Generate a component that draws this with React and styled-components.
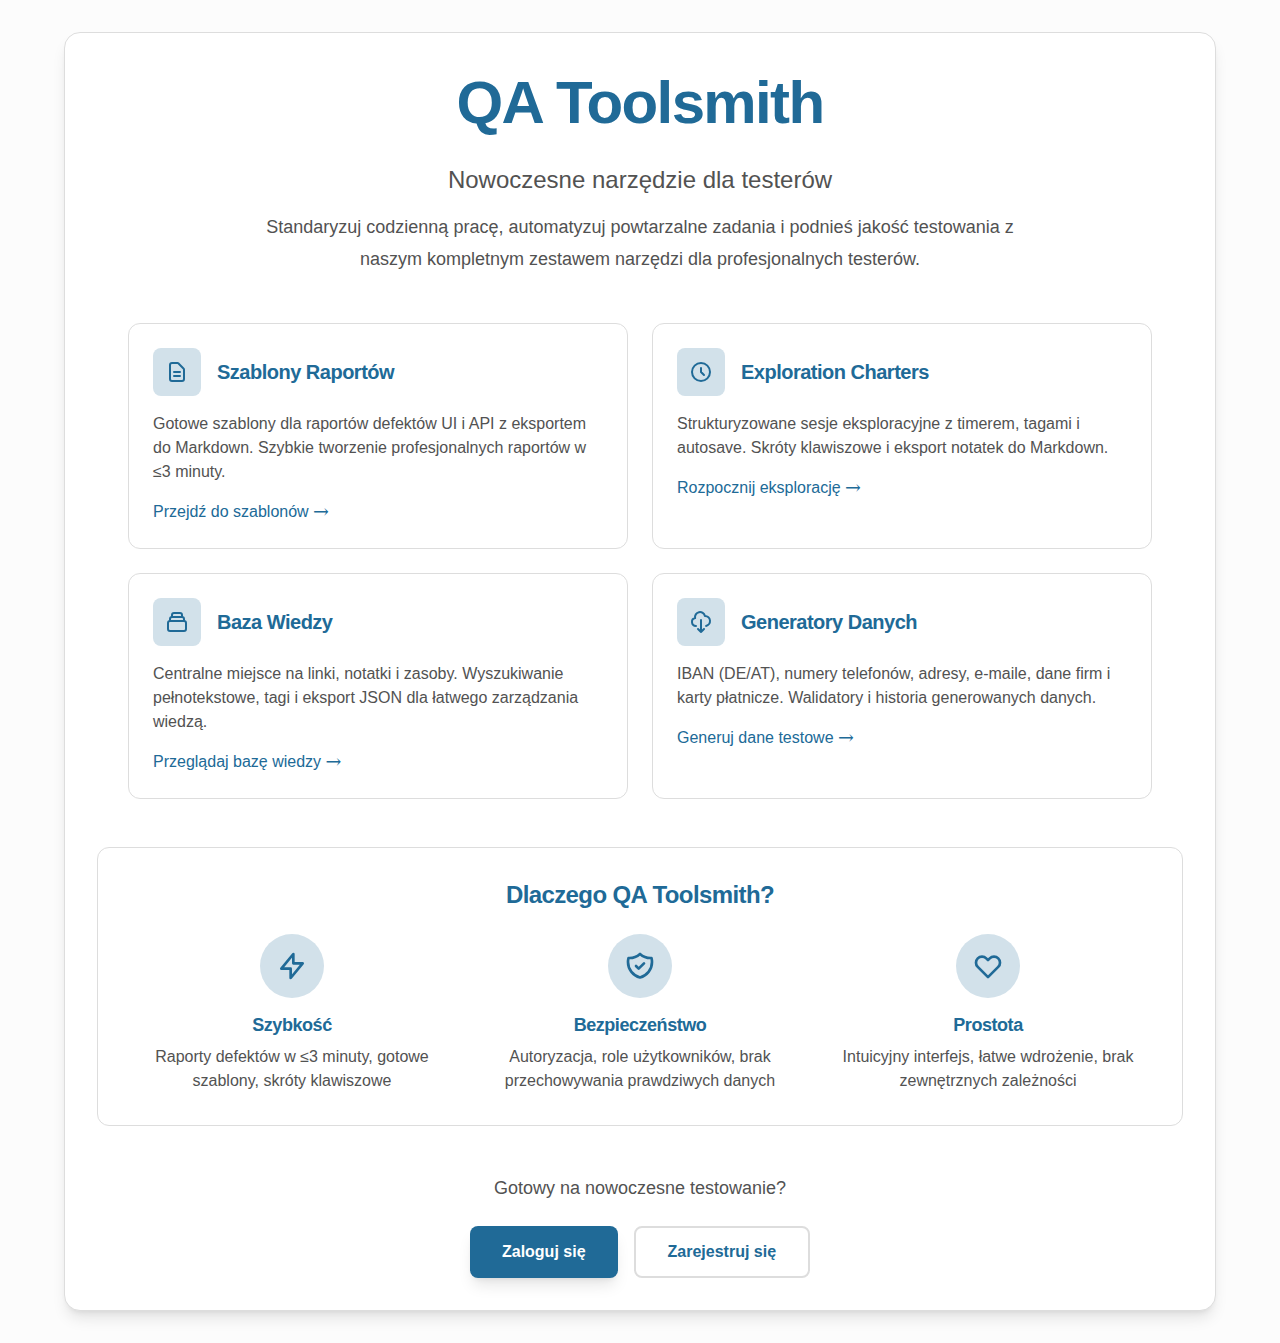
import React from "react";
import styled, { createGlobalStyle } from "styled-components";

const color = {
  primary: "#206a97",
  tint: "#d2e1ea",
  text: "#525252",
  border: "#dddddd",
  page: "#fcfcfc",
};

const GlobalStyle = createGlobalStyle`
  *, *::before, *::after { box-sizing: border-box; }
  body {
    margin: 0;
    background: ${color.page};
    color: ${color.text};
    font-family: Arial, "Liberation Sans", sans-serif;
    font-size: 16px;
    line-height: 24px;
  }
  h1, h2, h3, p { margin: 0; }
`;

const Page = styled.main`
  padding: 32px 64px;
`;

const Panel = styled.div`
  display: flex;
  flex-direction: column;
  gap: 48px;
  padding: 32px;
  background: #fff;
  border: 1px solid ${color.border};
  border-radius: 16px;
  box-shadow: 0 10px 15px -3px rgba(0, 0, 0, 0.1), 0 4px 6px -4px rgba(0, 0, 0, 0.1);
`;

const Heading = styled.h2`
  color: ${color.primary};
  font-size: ${(p) => p.$size}px;
  font-weight: 700;
  line-height: 1.25;
  letter-spacing: ${(p) => p.$tracking || "-0.025em"};
`;

const Hero = styled.header`
  text-align: center;
`;

const Subtitle = styled.p`
  margin-top: 24px;
  font-size: 24px;
  line-height: 32px;
`;

const Lead = styled.p`
  max-width: 768px;
  margin: 16px auto 0;
  font-size: 18px;
  line-height: 1.75;
`;

const CardGrid = styled.section`
  display: grid;
  grid-template-columns: 1fr 1fr;
  gap: 24px;
  width: 100%;
  max-width: 1024px;
  margin: 0 auto;
`;

const Card = styled.article`
  padding: 24px;
  border: 1px solid ${color.border};
  border-radius: 12px;
`;

const CardHeader = styled.div`
  display: flex;
  align-items: center;
  gap: 16px;
  margin-bottom: 16px;
`;

const IconTile = styled.div`
  display: flex;
  align-items: center;
  justify-content: center;
  width: ${(p) => (p.$round ? 64 : 48)}px;
  height: ${(p) => (p.$round ? 64 : 48)}px;
  border-radius: ${(p) => (p.$round ? "50%" : "8px")};
  background: ${color.tint};
  color: ${color.primary};
`;

const CardLink = styled.a`
  display: block;
  width: fit-content;
  margin-top: 16px;
  color: ${color.primary};
  text-decoration: none;
`;

const Arrow = styled.span`
  font-family: "DejaVu Serif", serif;
  font-size: 19px;
  line-height: 0;
  vertical-align: -1px;
`;

const Why = styled.section`
  padding: 32px;
  border: 1px solid ${color.border};
  border-radius: 12px;
  text-align: center;
`;

const FeatureGrid = styled.div`
  display: grid;
  grid-template-columns: repeat(3, 1fr);
  gap: 24px;
  margin-top: 24px;
`;

const Feature = styled.div`
  display: flex;
  flex-direction: column;
  align-items: center;

  ${Heading} {
    margin: 16px 0 8px;
  }
`;

const Cta = styled.section`
  text-align: center;
`;

const CtaText = styled.p`
  font-size: 18px;
  line-height: 28px;
`;

const Actions = styled.div`
  display: flex;
  justify-content: center;
  gap: 16px;
  margin-top: 24px;
`;

const Button = styled.a`
  display: flex;
  align-items: center;
  padding: ${(p) => (p.$primary ? "14px 32px" : "12px 32px")};
  border: ${(p) => (p.$primary ? "0" : `2px solid ${color.border}`)};
  border-radius: 8px;
  background: ${(p) => (p.$primary ? color.primary : "#fff")};
  box-shadow: ${(p) =>
    p.$primary
      ? "0 10px 15px -3px rgba(0, 0, 0, 0.1), 0 4px 6px -4px rgba(0, 0, 0, 0.1)"
      : "none"};
  color: ${(p) => (p.$primary ? "#fff" : color.primary)};
  font-weight: 700;
  text-decoration: none;
`;

const paths = {
  document:
    "M9 12h6m-6 4h6m2 5H7a2 2 0 01-2-2V5a2 2 0 012-2h5.586a1 1 0 01.707.293l5.414 5.414a1 1 0 01.293.707V19a2 2 0 01-2 2z",
  clock: "M12 8v4l3 3m6-3a9 9 0 11-18 0 9 9 0 0118 0z",
  collection:
    "M19 11H5m14 0a2 2 0 012 2v6a2 2 0 01-2 2H5a2 2 0 01-2-2v-6a2 2 0 012-2m14 0V9a2 2 0 00-2-2M5 11V9a2 2 0 012-2m0 0V5a2 2 0 012-2h6a2 2 0 012 2v2M7 7h10",
  cloud:
    "M7 16a4 4 0 01-.88-7.903A5 5 0 1115.9 6L16 6a5 5 0 011 9.9M9 19l3 3m0 0l3-3m-3 3V10",
  bolt: "M13 10V3L4 14h7v7l9-11h-7z",
  shield:
    "M9 12l2 2 4-4m5.618-4.016A11.955 11.955 0 0112 2.944a11.955 11.955 0 01-8.618 3.04A12.02 12.02 0 003 9c0 5.591 3.824 10.29 9 11.622 5.176-1.332 9-6.03 9-11.622 0-1.042-.133-2.052-.382-3.016z",
  heart:
    "M4.318 6.318a4.5 4.5 0 000 6.364L12 20.364l7.682-7.682a4.5 4.5 0 00-6.364-6.364L12 7.636l-1.318-1.318a4.5 4.5 0 00-6.364 0z",
};

function Icon({ name, size }) {
  return (
    <svg width={size} height={size} viewBox="0 0 24 24" fill="none" stroke="currentColor" strokeWidth="2" strokeLinecap="round" strokeLinejoin="round" aria-hidden="true">
      <path d={paths[name]} />
    </svg>
  );
}

const cards = [
  {
    icon: "document",
    title: "Szablony Raportów",
    text: "Gotowe szablony dla raportów defektów UI i API z eksportem do Markdown. Szybkie tworzenie profesjonalnych raportów w ≤3 minuty.",
    link: "Przejdź do szablonów",
  },
  {
    icon: "clock",
    title: "Exploration Charters",
    text: "Strukturyzowane sesje eksploracyjne z timerem, tagami i autosave. Skróty klawiszowe i eksport notatek do Markdown.",
    link: "Rozpocznij eksplorację",
  },
  {
    icon: "collection",
    title: "Baza Wiedzy",
    text: "Centralne miejsce na linki, notatki i zasoby. Wyszukiwanie pełnotekstowe, tagi i eksport JSON dla łatwego zarządzania wiedzą.",
    link: "Przeglądaj bazę wiedzy",
  },
  {
    icon: "cloud",
    title: "Generatory Danych",
    text: "IBAN (DE/AT), numery telefonów, adresy, e-maile, dane firm i karty płatnicze. Walidatory i historia generowanych danych.",
    link: "Generuj dane testowe",
  },
];

const features = [
  { icon: "bolt", title: "Szybkość", text: "Raporty defektów w ≤3 minuty, gotowe szablony, skróty klawiszowe" },
  { icon: "shield", title: "Bezpieczeństwo", text: "Autoryzacja, role użytkowników, brak przechowywania prawdziwych danych" },
  { icon: "heart", title: "Prostota", text: "Intuicyjny interfejs, łatwe wdrożenie, brak zewnętrznych zależności" },
];

export default function App() {
  return (
    <>
      <GlobalStyle />
      <Page>
        <Panel>
          <Hero>
            <Heading as="h1" $size={60} $tracking="-0.0275em">QA Toolsmith</Heading>
            <Subtitle>Nowoczesne narzędzie dla testerów</Subtitle>
            <Lead>
              Standaryzuj codzienną pracę, automatyzuj powtarzalne zadania i podnieś jakość
              testowania z naszym kompletnym zestawem narzędzi dla profesjonalnych testerów.
            </Lead>
          </Hero>

          <CardGrid>
            {cards.map((c) => (
              <Card key={c.title}>
                <CardHeader>
                  <IconTile><Icon name={c.icon} size={24} /></IconTile>
                  <Heading as="h3" $size={20}>{c.title}</Heading>
                </CardHeader>
                <p>{c.text}</p>
                <CardLink href="#">{c.link} <Arrow>→</Arrow></CardLink>
              </Card>
            ))}
          </CardGrid>

          <Why>
            <Heading $size={24}>Dlaczego QA Toolsmith?</Heading>
            <FeatureGrid>
              {features.map((f) => (
                <Feature key={f.title}>
                  <IconTile $round><Icon name={f.icon} size={32} /></IconTile>
                  <Heading as="h3" $size={18}>{f.title}</Heading>
                  <p>{f.text}</p>
                </Feature>
              ))}
            </FeatureGrid>
          </Why>

          <Cta>
            <CtaText>Gotowy na nowoczesne testowanie?</CtaText>
            <Actions>
              <Button $primary href="#">Zaloguj się</Button>
              <Button href="#">Zarejestruj się</Button>
            </Actions>
          </Cta>
        </Panel>
      </Page>
    </>
  );
}
